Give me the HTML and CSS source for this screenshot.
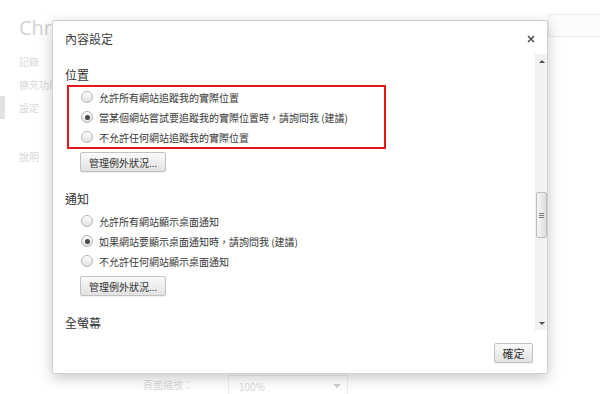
FILE: index.html
```html
<!DOCTYPE html>
<html lang="zh-Hant">
<head>
    <meta charset="UTF-8">
    <title>內容設定</title>
    <link rel="stylesheet" href="styles.css">
</head>
<body>
    <div class="page">
        <div class="bg">
            <aside class="nav">
                <div class="brand">Chrome</div>
                <ul class="nav-list">
                    <li>記錄</li>
                    <li>擴充功能</li>
                    <li class="selected">設定</li>
                    <li class="nav-gap">說明</li>
                </ul>
            </aside>
            <main class="bg-main">
                <div class="search-row"><div class="search"></div></div>
                <div class="zoom-row">
                    <span>頁面縮放：</span>
                    <div class="select">100%<span class="select-arrow"></span></div>
                </div>
            </main>
        </div>

        <div class="dialog">
            <div class="dialog-head">
                <span class="dialog-title">內容設定</span>
                <svg class="close" width="8" height="8" viewBox="0 0 8 8">
                    <path d="M1 1L7 7M7 1L1 7" stroke="#4a4a4a" stroke-width="1.5"/>
                </svg>
            </div>

            <div class="dialog-body">
                <div class="content">
                    <section class="section">
                        <h3>位置</h3>
                        <div class="options marked">
                            <label class="option"><span class="radio"></span>允許所有網站追蹤我的實際位置</label>
                            <label class="option"><span class="radio checked"></span>當某個網站嘗試要追蹤我的實際位置時，請詢問我 (建議)</label>
                            <label class="option"><span class="radio"></span>不允許任何網站追蹤我的實際位置</label>
                        </div>
                        <button class="btn btn-indent">管理例外狀況...</button>
                    </section>

                    <section class="section">
                        <h3>通知</h3>
                        <div class="options">
                            <label class="option"><span class="radio"></span>允許所有網站顯示桌面通知</label>
                            <label class="option"><span class="radio checked"></span>如果網站要顯示桌面通知時，請詢問我 (建議)</label>
                            <label class="option"><span class="radio"></span>不允許任何網站顯示桌面通知</label>
                        </div>
                        <button class="btn btn-indent">管理例外狀況...</button>
                    </section>

                    <section class="section">
                        <h3>全螢幕</h3>
                    </section>
                </div>

                <div class="scrollbar">
                    <div class="sb-btn"><span class="arrow-up"></span></div>
                    <div class="sb-track">
                        <div class="sb-thumb">
                            <span></span><span></span><span></span>
                        </div>
                    </div>
                    <div class="sb-btn"><span class="arrow-down"></span></div>
                </div>
            </div>

            <div class="dialog-foot">
                <button class="btn btn-ok">確定</button>
            </div>
        </div>
    </div>
</body>
</html>
```

FILE: styles.css
```css
* {
    box-sizing: border-box;
    margin: 0;
    padding: 0;
}

body {
    font-family: "Noto Sans CJK TC", "Noto Sans", sans-serif;
    background-color: #fff;
}

.page {
    position: relative;
    width: 600px;
    height: 394px;
    overflow: hidden;
    background-color: #fff;
}

/* faded settings page behind the dialog */

.bg {
    display: flex;
    height: 100%;
    color: #d8d8d8;
}

.nav {
    width: 52px;
    flex-shrink: 0;
    overflow: hidden;
    white-space: nowrap;
    padding-top: 16px;
}

.brand {
    padding-left: 19px;
    font-family: "Open Sans", sans-serif;
    font-size: 20px;
    line-height: 24px;
    color: #d2d2d2;
}

.nav-list {
    list-style: none;
    margin-top: 10px;
    font-size: 10px;
}

.nav-list li {
    height: 23px;
    line-height: 23px;
    padding-left: 14px;
    border-left: 5px solid transparent;
}

.nav-list .selected {
    border-left-color: #e2e2e2;
}

.nav-list .nav-gap {
    margin-top: 26px;
}

.bg-main {
    flex: 1;
    display: flex;
    flex-direction: column;
}

.search-row {
    display: flex;
    justify-content: flex-end;
    padding-top: 14px;
}

.search {
    width: 60px;
    height: 23px;
    margin-right: -8px;
    border: 1px solid #eee;
    background-color: #fcfcfc;
}

.zoom-row {
    margin-top: auto;
    display: flex;
    align-items: center;
    gap: 35px;
    padding-left: 91px;
    font-size: 10px;
    height: 19px;
}

.select {
    position: relative;
    width: 120px;
    height: 22px;
    margin-bottom: -3px;
    padding: 3px 0 0 10px;
    border: 1px solid #eee;
    color: #dadada;
}

.select-arrow {
    position: absolute;
    right: 6px;
    top: 8px;
    border-left: 4px solid transparent;
    border-right: 4px solid transparent;
    border-top: 4px solid #d0d0d0;
}

/* dialog */

.dialog {
    position: absolute;
    left: 52px;
    top: 20px;
    width: 496px;
    height: 354px;
    display: flex;
    flex-direction: column;
    background-color: #fff;
    border: 1px solid #d2d2d2;
    border-radius: 2px;
    box-shadow: 0 4px 14px rgba(0, 0, 0, 0.22);
    color: #333;
}

.dialog-head {
    height: 33px;
    display: flex;
    justify-content: space-between;
    align-items: center;
    padding: 2px 12px 0 12px;
}

.dialog-title {
    font-size: 12px;
    line-height: 14px;
    color: #404040;
}

.dialog-body {
    height: 276px;
    display: flex;
}

.content {
    flex: 1;
    overflow: hidden;
    padding: 13px 0 0 12px;
}

.section {
    margin-bottom: 19px;
}

.section h3 {
    font-size: 12px;
    line-height: 16px;
    font-weight: 400;
    color: #333;
}

.options {
    width: 319px;
    margin: 2px 0 0 2px;
    padding-left: 12px;
    border: 2px solid transparent;
}

.options.marked {
    border-color: #e8161c;
}

.option {
    height: 20px;
    display: flex;
    align-items: center;
    gap: 6px;
    font-size: 10px;
    color: #383838;
    white-space: nowrap;
}

.radio {
    width: 12px;
    height: 12px;
    flex-shrink: 0;
    display: flex;
    align-items: center;
    justify-content: center;
    border: 1px solid #b4b4b4;
    border-radius: 50%;
    background: linear-gradient(#fefefe, #e0e0e0);
}

.radio.checked::after {
    content: "";
    width: 5px;
    height: 5px;
    border-radius: 50%;
    background-color: #484848;
}

.btn {
    height: 20px;
    padding: 0 8px;
    font-family: inherit;
    font-size: 10px;
    white-space: nowrap;
    color: #333;
    background: linear-gradient(#fafafa, #e2e2e2);
    border: 1px solid #c2c2c2;
    border-radius: 2px;
    box-shadow: 0 1px 0 rgba(0, 0, 0, 0.06);
}

.btn-indent {
    display: block;
    margin: 3px 0 0 15px;
    min-width: 86px;
}

.scrollbar {
    width: 12px;
    display: flex;
    flex-direction: column;
    background-color: #f2f2f2;
    border-left: 1px solid #ececec;
}

.sb-btn {
    height: 14px;
    display: flex;
    align-items: center;
    justify-content: center;
}

.arrow-up {
    border-left: 3px solid transparent;
    border-right: 3px solid transparent;
    border-bottom: 3px solid #505050;
}

.arrow-down {
    border-left: 3px solid transparent;
    border-right: 3px solid transparent;
    border-top: 3px solid #505050;
}

.sb-track {
    flex: 1;
}

.sb-thumb {
    height: 46px;
    margin-top: 124px;
    display: flex;
    flex-direction: column;
    align-items: center;
    justify-content: center;
    gap: 1px;
    background: linear-gradient(90deg, #f6f6f6, #dedede);
    border: 1px solid #bcbcbc;
    border-radius: 2px;
}

.sb-thumb span {
    width: 5px;
    height: 1px;
    background-color: #7a7a7a;
}

.dialog-foot {
    flex: 1;
    display: flex;
    justify-content: flex-end;
    align-items: flex-start;
    padding: 13px 14px 0 0;
}

.btn-ok {
    width: 39px;
    padding: 0;
    font-size: 11px;
}
```
